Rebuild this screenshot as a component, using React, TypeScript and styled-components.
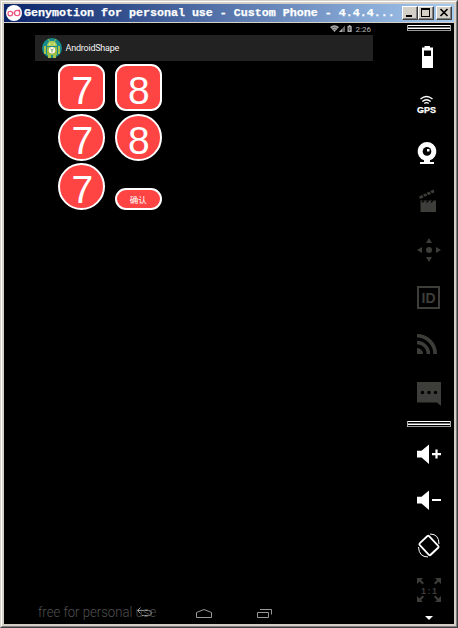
import React from 'react';
import styled, { createGlobalStyle, css } from 'styled-components';

const Global = createGlobalStyle`
  * { box-sizing: border-box; }
  html, body { margin: 0; padding: 0; background: #d4d0c8; overflow: hidden; }
  svg { display: block; }
`;

const Frame = styled.div`
  width: 458px;
  height: 628px;
  border: 1px solid;
  border-color: #d4d0c8 #404040 #404040 #d4d0c8;
`;

const FrameInner = styled.div`
  height: 100%;
  border: 1px solid;
  border-color: #fff #808080 #808080 #fff;
  padding: 2px;
  background: #d4d0c8;
  display: flex;
  flex-direction: column;
`;

const TitleBar = styled.header`
  height: 18px;
  flex: none;
  display: flex;
  align-items: center;
  padding: 0 2px 0 2px;
  background: linear-gradient(90deg, #0a246a, #a6caf0);
`;

const Title = styled.h1`
  flex: 1;
  margin: 0 0 0 2px;
  font: bold 11.67px/19px 'Liberation Mono', monospace;
  color: #fff;
  white-space: pre;
  -webkit-text-stroke: 0.25px #fff;
`;

const CaptionButton = styled.button<{ $gap?: boolean }>`
  width: 16px;
  height: 14px;
  padding: 0;
  margin-left: ${(p) => (p.$gap ? 2 : 0)}px;
  background: #d4d0c8;
  border: 1px solid;
  border-color: #fff #404040 #404040 #fff;
  box-shadow: inset -1px -1px #808080;
`;

const Body = styled.main`
  flex: 1;
  margin-top: 1px;
  background: #000;
  display: flex;
  justify-content: space-between;
`;

const Device = styled.section`
  width: 338px;
  margin-left: 31px;
  display: flex;
  flex-direction: column;
  font-family: Roboto, sans-serif;
`;

const StatusBar = styled.div`
  height: 12px;
  display: flex;
  justify-content: flex-end;
  padding-right: 2px;
  gap: 3px;
  color: #b8b8b8;
  font-size: 8px;
  line-height: 13px;
`;

const ActionBar = styled.div`
  height: 26px;
  background: #222;
  display: flex;
  align-items: center;
  gap: 3.5px;
  padding-left: 7px;
  color: #f3f3f3;
  font-size: 9px;
  line-height: 27px;
  letter-spacing: -0.22px;
`;

const ShapeGrid = styled.div`
  display: grid;
  grid-template-columns: 47px 47px;
  grid-template-rows: 47px 47px 47px;
  column-gap: 9.5px;
  row-gap: 2.5px;
  margin: 3px 0 0 23.3px;
  align-items: end;
`;

const ShapeButton = styled.button<{ $kind: 'square' | 'round' | 'pill' }>`
  height: 47px;
  width: 47px;
  padding: 6px 0 0 1px;
  border: 2px solid #fff;
  border-radius: 11px;
  background: #ff4444;
  color: #fff;
  font: 39px/37px 'Liberation Sans', sans-serif;
  text-align: center;
  ${(p) => p.$kind === 'round' && css`border-radius: 50%;`}
  ${(p) => p.$kind === 'pill' && css`
    height: 22px;
    padding: 0;
    font: 8.5px/18px 'Noto Sans CJK SC', sans-serif;
  `}
`;

const NavBar = styled.nav`
  height: 24px;
  margin-top: auto;
  display: grid;
  grid-template-columns: 99px 60px 60px;
  align-items: center;
`;

const Watermark = styled.span`
  grid-area: 1 / 1 / 2 / 3;
  padding-left: 3px;
  color: #505050;
  font-size: 15.5px;
  font-weight: 300;
  white-space: nowrap;
  transform: scaleX(0.846);
  transform-origin: 3px 50%;
`;

const NavIcon = styled.svg<{ $col: number }>`
  grid-row: 1;
  grid-column: ${(p) => p.$col};
  width: 20px;
  height: 24px;
  fill: none;
  stroke: #999;
`;

const Toolbar = styled.aside`
  width: 49px;
  display: flex;
  flex-direction: column;
`;

const Divider = styled.div`
  width: 44px;
  height: 6px;
  flex: none;
  margin: 2px 0 2px 2px;
  border-left: 1px solid #aaa;
  border-right: 1px solid #aaa;
  background: linear-gradient(
    #fff 0 1px, #000 1px 2px, #777 2px 3px, #fff 3px 4px, #000 4px 5px, #999 5px 6px
  );
`;

const Tool = styled.svg<{ $off?: boolean; $h?: number }>`
  width: 48px;
  height: ${(p) => p.$h ?? 48}px;
  flex: none;
  color: ${(p) => (p.$off ? '#3d3d39' : '#fff')};
  fill: currentColor;
  font-family: 'Liberation Sans', sans-serif;
  font-weight: bold;
`;

const ToolGroup = styled.div<{ $top: number }>`
  padding-top: ${(p) => p.$top}px;
`;

const GenymotionLogo = () => (
  <svg width="16" height="16" viewBox="0 0 16 16">
    <circle cx="8" cy="8" r="8" fill="#fff" />
    <g fill="none" stroke="#e9527c" strokeWidth="1.15">
      <circle cx="4.3" cy="8.5" r="2.3" />
      <circle cx="11.2" cy="8" r="2.7" />
      <path d="M6.5 8h2M12 5.3h2" />
    </g>
  </svg>
);

const AppIcon = () => (
  <svg width="20" height="22" viewBox="0 0 20 22">
    <circle cx="10" cy="11" r="10" fill="#168c8c" />
    <path d="M6 2l2 3M14 2l-2 3" stroke="#a5c24a" />
    <path d="M5 9a5 5 0 0 1 10 0z" fill="#b5cf58" />
    <path d="M5 10h10v8H5z" fill="#9ebb42" />
    <path d="M2 9h2v8H2zM16 9h2v8h-2zM6 18h3v3H6zM11 18h3v3h-3z" fill="#a7c34b" />
    <circle cx="7.7" cy="7" r=".6" fill="#fff" />
    <circle cx="12.3" cy="7" r=".6" fill="#fff" />
    <circle cx="10" cy="13.3" r="3.2" fill="#f8f8ea" />
    <path d="M8.5 12l1.5 1 1.5-1M10 13v2.5" stroke="#758154" strokeWidth=".8" fill="none" />
  </svg>
);

const StatusIcons = () => (
  <svg width="23" height="12" viewBox="0 0 23 12" fill="#aaa">
    <path d="M0 4Q4.5 .5 9 4L4.5 9z" />
    <path d="M1.5 5.2Q4.5 3.2 7.5 5.2M3 7q1.500-1 3 0" fill="none" stroke="#333" strokeWidth=".6" />
    <path d="M15 2.500V9H9z" fill="#666" />
    <path d="M12 6v3H9z" />
    <path d="M17.500 3h1.300V2h1.600v1h1.300v6h-4.200z" />
    <path d="M20 4l-1.300 2h1.500L19 8" stroke="#222" strokeWidth=".7" fill="none" />
  </svg>
);

const shapes: { label: string; kind: 'square' | 'round' | 'pill' }[] = [
  { label: '7', kind: 'square' },
  { label: '8', kind: 'square' },
  { label: '7', kind: 'round' },
  { label: '8', kind: 'round' },
  { label: '7', kind: 'round' },
  { label: '确认', kind: 'pill' },
];

const Speaker = () => <path d="M12 19.700h4.500L24 13.500v19.500l-7.500-6.500H12z" />;

export default function App() {
  return (
    <>
      <Global />
      <Frame>
        <FrameInner>
          <TitleBar>
            <GenymotionLogo />
            <Title>Genymotion for personal use - Custom Phone - 4.4.4...</Title>
            <CaptionButton aria-label="Minimize">
              <svg width="14" height="12"><path d="M3 8h6v2H3z" /></svg>
            </CaptionButton>
            <CaptionButton aria-label="Maximize">
              <svg width="14" height="12"><path d="M2 1h9v9H2zM3 3v6h7V3z" fillRule="evenodd" /></svg>
            </CaptionButton>
            <CaptionButton aria-label="Close" $gap>
              <svg width="14" height="12"><path d="M3.500 2l7 7M10.500 2l-7 7" stroke="#000" strokeWidth="1.700" /></svg>
            </CaptionButton>
          </TitleBar>
          <Body>
            <Device>
              <StatusBar>
                <StatusIcons />
                <span>2:26</span>
              </StatusBar>
              <ActionBar>
                <AppIcon />
                <span>AndroidShape</span>
              </ActionBar>
              <ShapeGrid>
                {shapes.map((s, i) => (
                  <ShapeButton key={i} $kind={s.kind}>{s.label}</ShapeButton>
                ))}
              </ShapeGrid>
              <NavBar>
                <Watermark>free for personal use</Watermark>
                <NavIcon $col={2} viewBox="0 0 20 24">
                  <path d="M3 10.500h11.500q3 0 3 2.500t-3 2.500H8M6.500 7.500l-3 3 3 3" />
                </NavIcon>
                <NavIcon $col={3} viewBox="0 0 20 24">
                  <path d="M2.500 17.500v-5L10 9.500l7.500 3v5z" />
                </NavIcon>
                <NavIcon $col={4} viewBox="0 0 20 24">
                  <path d="M3.500 12.500h11v5h-11zM6 9.500h11.500v5" />
                </NavIcon>
              </NavBar>
            </Device>
            <Toolbar>
              <Divider />
              <Tool viewBox="0 0 48 48">
                <path d="M19.500 13h5.500v1.500h3V35H17V14.500h2.500zM19 17.500v5.500h7v-5.500z" fillRule="evenodd" />
              </Tool>
              <Tool viewBox="0 0 48 48">
                <text x="12" y="32" fontSize="8.500" textLength="19" lengthAdjust="spacingAndGlyphs" stroke="#fff" strokeWidth=".25">GPS</text>
                <g fill="none" stroke="#fff" strokeWidth="1.300">
                  <path d="M15.500 18q6-5 12 0M17.300 20.500q4.200-3.500 8.400 0M19.300 22.500q2.200-1.700 4.400 0" />
                </g>
              </Tool>
              <Tool viewBox="0 0 48 48">
                <path d="M22 13a9.400 9.400 0 0 1 3 18.300v1.700h4v2H15v-2h4v-1.700A9.400 9.400 0 0 1 22 13z" />
                <circle cx="22" cy="22.400" r="4.300" fill="#000" />
                <path d="M22 22.500V20h2.500v2.500z" />
              </Tool>
              <Tool $off viewBox="0 0 48 48">
                <path d="M15.500 23.500H31v11.500H15.500z" />
                <path d="M14 19.500l14.500-7 1 2.700-14.500 6.800z" />
                <path d="M17 17l2.500 3.500M20.500 15.300l2.500 3.500M24.300 13.500l2.500 3.500M19 23.500l-2 2M23.500 23.500l-2 2M28 23.500l-2 2" stroke="#000" strokeWidth="1.100" />
              </Tool>
              <Tool $off viewBox="0 0 48 48">
                <circle cx="24" cy="25" r="3" />
                <path d="M24 13l3 5h-6zM24 37l3-5h-6zM12 25l5-3v6zM36 25l-5-3v6z" />
              </Tool>
              <Tool $off viewBox="0 0 48 48">
                <path d="M12 13h23v23H12zM14 15v19h19V15z" fillRule="evenodd" />
                <text x="16.500" y="30.200" fontSize="15.500" textLength="14" lengthAdjust="spacingAndGlyphs">ID</text>
              </Tool>
              <Tool $off viewBox="0 0 48 48">
                <g fill="none" stroke="currentColor">
                  <path d="M12 14.800A18.200 18.200 0 0 1 30.200 33" strokeWidth="3.600" />
                  <path d="M12 21.500A11.500 11.500 0 0 1 23.500 33" strokeWidth="3.400" />
                </g>
                <path d="M12 27a6 6 0 0 1 6 6h-6z" />
              </Tool>
              <Tool $off viewBox="0 0 48 48">
                <path d="M12 13h24v24l-4-3.500H12z" />
                <g fill="#000">
                  <circle cx="17.500" cy="23.500" r="1.700" />
                  <circle cx="24" cy="23.500" r="1.700" />
                  <circle cx="30.500" cy="23.500" r="1.700" />
                </g>
              </Tool>
              <ToolGroup $top={2}>
                <Divider />
              </ToolGroup>
              <ToolGroup $top={2}>
                <Tool $h={46} viewBox="0 0 48 46">
                  <Speaker />
                  <path d="M27 22h9v2.200h-9zM30.400 18.500h2.200v9h-2.200z" />
                </Tool>
                <Tool $h={46} viewBox="0 0 48 46">
                  <Speaker />
                  <path d="M27 22h9v2h-9z" />
                </Tool>
                <Tool $h={45} viewBox="0 0 48 45">
                  <g fill="none" stroke="#fff">
                    <rect x="17.500" y="14.500" width="13" height="16" rx="1.500" strokeWidth="1.800" transform="rotate(-43 24 22.500)" />
                    <path d="M25 11q9 0 9 10M23 34q-9 0-9.500-10" strokeWidth="1" />
                    <path d="M25.500 31.500l7.500-7" strokeWidth="1.200" />
                  </g>
                </Tool>
                <Tool $off $h={45} viewBox="0 0 48 45">
                  <path d="M12 10h6l-2 2 3 3-1.500 1.500-3-3L12 16zM36 10h-6l2 2-3 3 1.500 1.500 3-3L36 16zM12 34h6l-2-2 3-3-1.500-1.500-3 3L12 28zM36 34h-6l2-2-3-3 1.500-1.500 3 3L36 28z" />
                  <text x="16" y="25.500" fontSize="9" textLength="16" lengthAdjust="spacing">1:1</text>
                </Tool>
                <Tool $h={10} viewBox="0 0 48 10">
                  <path d="M20 3h8l-4 4z" />
                </Tool>
              </ToolGroup>
            </Toolbar>
          </Body>
        </FrameInner>
      </Frame>
    </>
  );
}
